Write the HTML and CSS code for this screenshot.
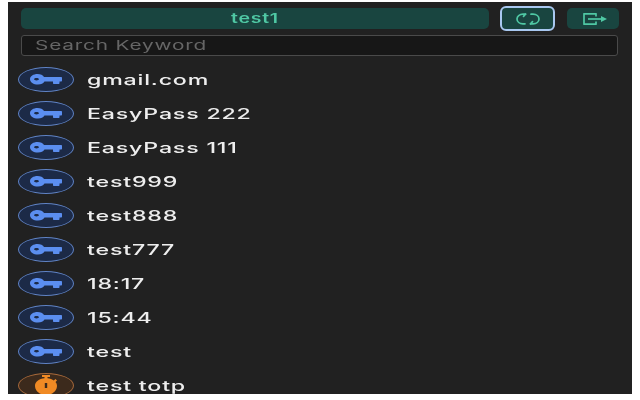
FILE: index.html
```html
<!DOCTYPE html>
<html lang="en">
<head>
<meta charset="utf-8">
<title>EasyPass</title>
<link rel="stylesheet" href="styles.css">
</head>
<body>
<svg class="defs" width="0" height="0" aria-hidden="true">
  <symbol id="key" viewBox="0 0 32 11">
    <path fill-rule="evenodd" d="M7.500 0c3 0 5.500 1.200 6.500 3h17c.6 0 1 .4 1 1v2.500c0 .6-.4 1-1 1h-1.500V9c0 .6-.4 1-1 1h-4.500c-.6 0-1-.4-1-1V7.500h-8.500c-1 1.900-3.500 3-6.500 3C3.400 10.500 0 8.200 0 5.200S3.400 0 7.500 0zM6.500 4c-1.300 0-2.400.5-2.400 1.200s1.100 1.200 2.400 1.200 2.400-.5 2.400-1.200S7.800 4 6.500 4z"/>
  </symbol>
</svg>
<main class="panel">
  <header class="topbar">
    <div class="vault"><span class="stretch">test1</span></div>
    <button class="btn btn-active" aria-label="Sync">
      <svg width="24" height="12" viewBox="0 0 24 12" fill="none" stroke="currentColor" stroke-width="1.700" stroke-linecap="round" stroke-linejoin="round">
        <path d="M9.500 1.200H7C3.500 1.200 1 3.200 1 6s2.500 4.800 6 4.800h2"/>
        <path d="M14.500 10.800H17c3.500 0 6-2 6-4.800s-2.500-4.800-6-4.800h-2"/>
        <path d="M7.500 3.300 9.500 1.200"/>
        <path d="M16.500 8.700 14.500 10.800"/>
      </svg>
    </button>
    <button class="btn btn-exit" aria-label="Log out">
      <svg width="24" height="12" viewBox="0 0 24 12" fill="none" stroke="currentColor" stroke-width="1.700" stroke-linejoin="round">
        <path d="M13 3.500V.8H1v10.400h12V8.500"/>
        <path d="M5 6h14"/>
        <path d="M18 3l6 3-6 3z" fill="currentColor" stroke="none"/>
      </svg>
    </button>
  </header>
  <div class="search"><span class="stretch">Search Keyword</span></div>
  <ul class="list">
    <li class="row"><span class="badge"><svg class="key"><use href="#key"/></svg></span><span class="name stretch">gmail.com</span></li>
    <li class="row"><span class="badge"><svg class="key"><use href="#key"/></svg></span><span class="name stretch">EasyPass 222</span></li>
    <li class="row"><span class="badge"><svg class="key"><use href="#key"/></svg></span><span class="name stretch">EasyPass 111</span></li>
    <li class="row"><span class="badge"><svg class="key"><use href="#key"/></svg></span><span class="name stretch">test999</span></li>
    <li class="row"><span class="badge"><svg class="key"><use href="#key"/></svg></span><span class="name stretch">test888</span></li>
    <li class="row"><span class="badge"><svg class="key"><use href="#key"/></svg></span><span class="name stretch">test777</span></li>
    <li class="row"><span class="badge"><svg class="key"><use href="#key"/></svg></span><span class="name stretch">18:17</span></li>
    <li class="row"><span class="badge"><svg class="key"><use href="#key"/></svg></span><span class="name stretch">15:44</span></li>
    <li class="row"><span class="badge"><svg class="key"><use href="#key"/></svg></span><span class="name stretch">test</span></li>
    <li class="row"><span class="badge badge-totp">
      <svg class="timer" viewBox="0 0 26 20" preserveAspectRatio="none"><path fill-rule="evenodd" d="M9 0h8v2h-2.500v1.200c2.500.2 4.700 1 6.300 2.300L22.500 4 24 5.400l-1.500 1.500c1 1.200 1.500 2.500 1.500 3.800C24 15.900 19.100 20 13 20S2 15.900 2 10.700C2 6.700 6 3.600 11.500 3.200V2H9zM11.800 8v5h2.400V8z"/></svg>
    </span><span class="name stretch">test totp</span></li>
  </ul>
</main>
</body>
</html>
```
FILE: styles.css
```css
* { box-sizing: border-box; }
html, body { margin: 0; height: 100%; background: #fff; }
body { padding: 2px 8px 6px; overflow: hidden; }
.defs { position: absolute; }
.panel {
  height: 392px;
  background: #212121;
  overflow: hidden;
  padding: 4px 13px 0 10px;
  font-family: Inter, sans-serif;
  filter: blur(.4px);
}
.stretch { display: inline-block; transform: scaleX(1.6); transform-origin: left center; }
.vault .stretch { transform: scaleX(1.5); transform-origin: center; }
.topbar { display: flex; align-items: center; height: 25px; }
.vault {
  flex: 1;
  height: 21px;
  margin: 0 11px 0 3px;
  border-radius: 5px;
  background: #194540;
  color: #4fc8a4;
  font-size: 13px;
  font-weight: 600;
  letter-spacing: .5px;
  line-height: 21px;
  text-align: center;
}
.btn {
  display: flex;
  align-items: center;
  justify-content: center;
  padding: 0;
  border: 0;
  border-radius: 5px;
  background: #194540;
  color: #4fc8a4;
}
.btn-active {
  width: 55px;
  height: 25px;
  margin-right: 12px;
  border: 2px solid #a9c8f0;
  border-radius: 6px;
}
.btn-exit { width: 52px; height: 21px; padding-left: 4px; }
.search {
  height: 21px;
  margin: 4px 1px 0 3px;
  padding-left: 13px;
  border: 1px solid #4a4a4a;
  border-radius: 3px;
  background: #171717;
  color: #666;
  font-size: 13px;
  letter-spacing: .5px;
  line-height: 19px;
}
.list { margin: 6px 0 0; padding: 0; list-style: none; }
.row { display: flex; align-items: center; height: 34px; }
.badge {
  display: flex;
  flex: none;
  align-items: center;
  justify-content: center;
  width: 56px;
  height: 25px;
  border: 1.500px solid #5f82c4;
  border-radius: 50%;
  background: #1c2a47;
}
.key { width: 32px; height: 11px; fill: #5b8ef0; }
.badge-totp { border-color: #a5683a; background: #3c2a1c; }
.timer { width: 26px; height: 20px; fill: #f08a24; }
.name {
  margin-left: 13px;
  color: #eee;
  font-size: 14.500px;
  font-weight: 500;
  letter-spacing: .5px;
}
```
